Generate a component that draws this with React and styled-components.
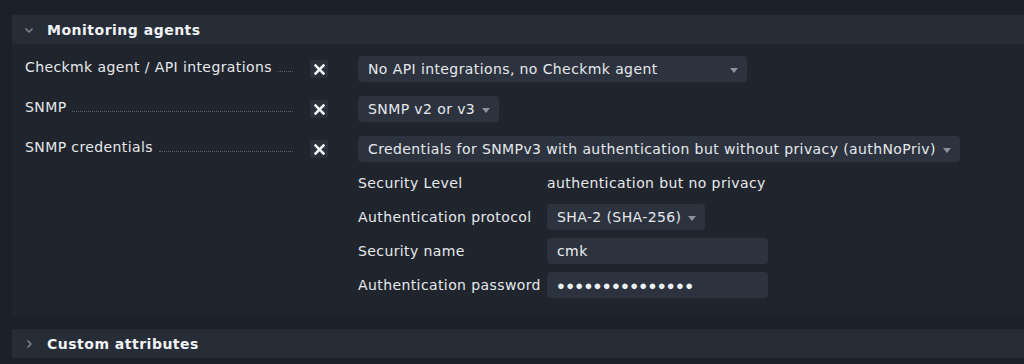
import React from 'react';
import styled, { createGlobalStyle } from 'styled-components';

const GlobalStyle = createGlobalStyle`
  html, body {
    margin: 0;
    padding: 0;
    background: #1c2129;
  }
  body {
    font-family: "DejaVu Sans", "Liberation Sans", Arial, sans-serif;
    font-size: 14px;
    letter-spacing: 0.4px;
    color: #e6e8ec;
  }
`;

const Page = styled.div`
  width: 1024px;
  height: 364px;
  padding: 15px 0 0 12px;
  box-sizing: border-box;
  overflow: hidden;
`;

const Section = styled.div`
  margin-bottom: 13px;
`;

const Header = styled.div`
  display: flex;
  align-items: center;
  height: 29px;
  background: #272d37;
  padding-left: 12px;
`;

const Chevron = styled.svg`
  width: 10px;
  height: 10px;
  margin-right: 13px;
  flex-shrink: 0;
`;

const Title = styled.span`
  font-family: "DejaVu Sans", Verdana, sans-serif;
  font-weight: bold;
  font-size: 14px;
  color: #f2f3f5;
  letter-spacing: 0.5px;
`;

const Body = styled.div`
  background: #20252d;
  padding: 12px 0 18px 13px;
  display: grid;
  grid-template-columns: 268px 48px 1fr;
  row-gap: 14px;
  align-items: start;
`;

const Label = styled.div`
  display: flex;
  align-items: flex-end;
  height: 26px;
  padding-bottom: 7px;
  box-sizing: border-box;
  overflow: hidden;
  white-space: nowrap;
`;

const LabelText = styled.span`
  flex-shrink: 0;
  padding-right: 6px;
`;

const Leader = styled.span`
  flex: 1;
  min-width: 14px;
  border-bottom: 1px dotted #5c626b;
  margin-bottom: 3px;
`;

const ToggleCell = styled.div`
  height: 26px;
  display: flex;
  align-items: center;
  padding-left: 17px;
`;

const XButton = styled.div`
  width: 18px;
  height: 18px;
  background: #2b313b;
  border-radius: 2px;
  display: flex;
  align-items: center;
  justify-content: center;
`;

const Value = styled.div`
  display: flex;
  flex-direction: column;
  gap: 8px;
  padding-left: 17px;
`;

const Select = styled.div`
  display: inline-flex;
  align-items: center;
  align-self: flex-start;
  height: 26px;
  box-sizing: border-box;
  background: #2c333e;
  border-radius: 4px;
  padding: 0 9px 0 10px;
  width: ${p => (p.$width ? `${p.$width}px` : 'auto')};
  white-space: nowrap;
`;

const SelectText = styled.span`
  flex: 1;
`;

const Arrow = styled.span`
  width: 0;
  height: 0;
  border-left: 4px solid transparent;
  border-right: 4px solid transparent;
  border-top: 5px solid #8e939b;
  margin-left: 7px;
  margin-top: 2px;
`;

const SubGrid = styled.div`
  display: grid;
  grid-template-columns: 189px auto;
  row-gap: 8px;
  align-items: center;
`;

const SubLabel = styled.div`
  height: 26px;
  display: flex;
  align-items: center;
  white-space: nowrap;
`;

const TextInput = styled.div`
  width: 221px;
  height: 26px;
  box-sizing: border-box;
  background: #2c333e;
  border-radius: 4px;
  padding: 0 10px;
  display: flex;
  align-items: center;
  color: #eef0f3;
`;

const Dots = styled.span`
  font-family: "Liberation Sans", Arial, sans-serif;
  font-size: 13px;
  letter-spacing: 1.3px;
`;

function Cross() {
  return (
    <svg width="11" height="11" viewBox="0 0 11 11">
      <path d="M1.6 1.6 L9.4 9.4 M9.4 1.6 L1.6 9.4" stroke="#f4f5f7" strokeWidth="2.6" strokeLinecap="square" />
    </svg>
  );
}

function Dropdown({ children, width }) {
  return (
    <Select $width={width}>
      <SelectText>{children}</SelectText>
      <Arrow />
    </Select>
  );
}

function AttrLabel({ text }) {
  return (
    <Label>
      <LabelText>{text}</LabelText>
      <Leader />
    </Label>
  );
}

export default function App() {
  return (
    <Page>
      <GlobalStyle />
      <Section>
        <Header>
          <Chevron viewBox="0 0 10 10">
            <path d="M1.5 3.5 L5 7 L8.5 3.5" stroke="#868b94" strokeWidth="1.4" fill="none" />
          </Chevron>
          <Title>Monitoring agents</Title>
        </Header>
        <Body>
          <AttrLabel text="Checkmk agent / API integrations" />
          <ToggleCell><XButton><Cross /></XButton></ToggleCell>
          <Value>
            <Dropdown width={389}>No API integrations, no Checkmk agent</Dropdown>
          </Value>

          <AttrLabel text="SNMP" />
          <ToggleCell><XButton><Cross /></XButton></ToggleCell>
          <Value>
            <Dropdown>SNMP v2 or v3</Dropdown>
          </Value>

          <AttrLabel text="SNMP credentials" />
          <ToggleCell><XButton><Cross /></XButton></ToggleCell>
          <Value>
            <Dropdown>Credentials for SNMPv3 with authentication but without privacy (authNoPriv)</Dropdown>
            <SubGrid>
              <SubLabel>Security Level</SubLabel>
              <SubLabel>authentication but no privacy</SubLabel>
              <SubLabel>Authentication protocol</SubLabel>
              <div><Dropdown>SHA-2 (SHA-256)</Dropdown></div>
              <SubLabel>Security name</SubLabel>
              <TextInput>cmk</TextInput>
              <SubLabel>Authentication password</SubLabel>
              <TextInput><Dots>●●●●●●●●●●●●●●●</Dots></TextInput>
            </SubGrid>
          </Value>
        </Body>
      </Section>
      <Section>
        <Header>
          <Chevron viewBox="0 0 10 10">
            <path d="M3.5 1.5 L7 5 L3.5 8.5" stroke="#868b94" strokeWidth="1.4" fill="none" />
          </Chevron>
          <Title>Custom attributes</Title>
        </Header>
      </Section>
    </Page>
  );
}
